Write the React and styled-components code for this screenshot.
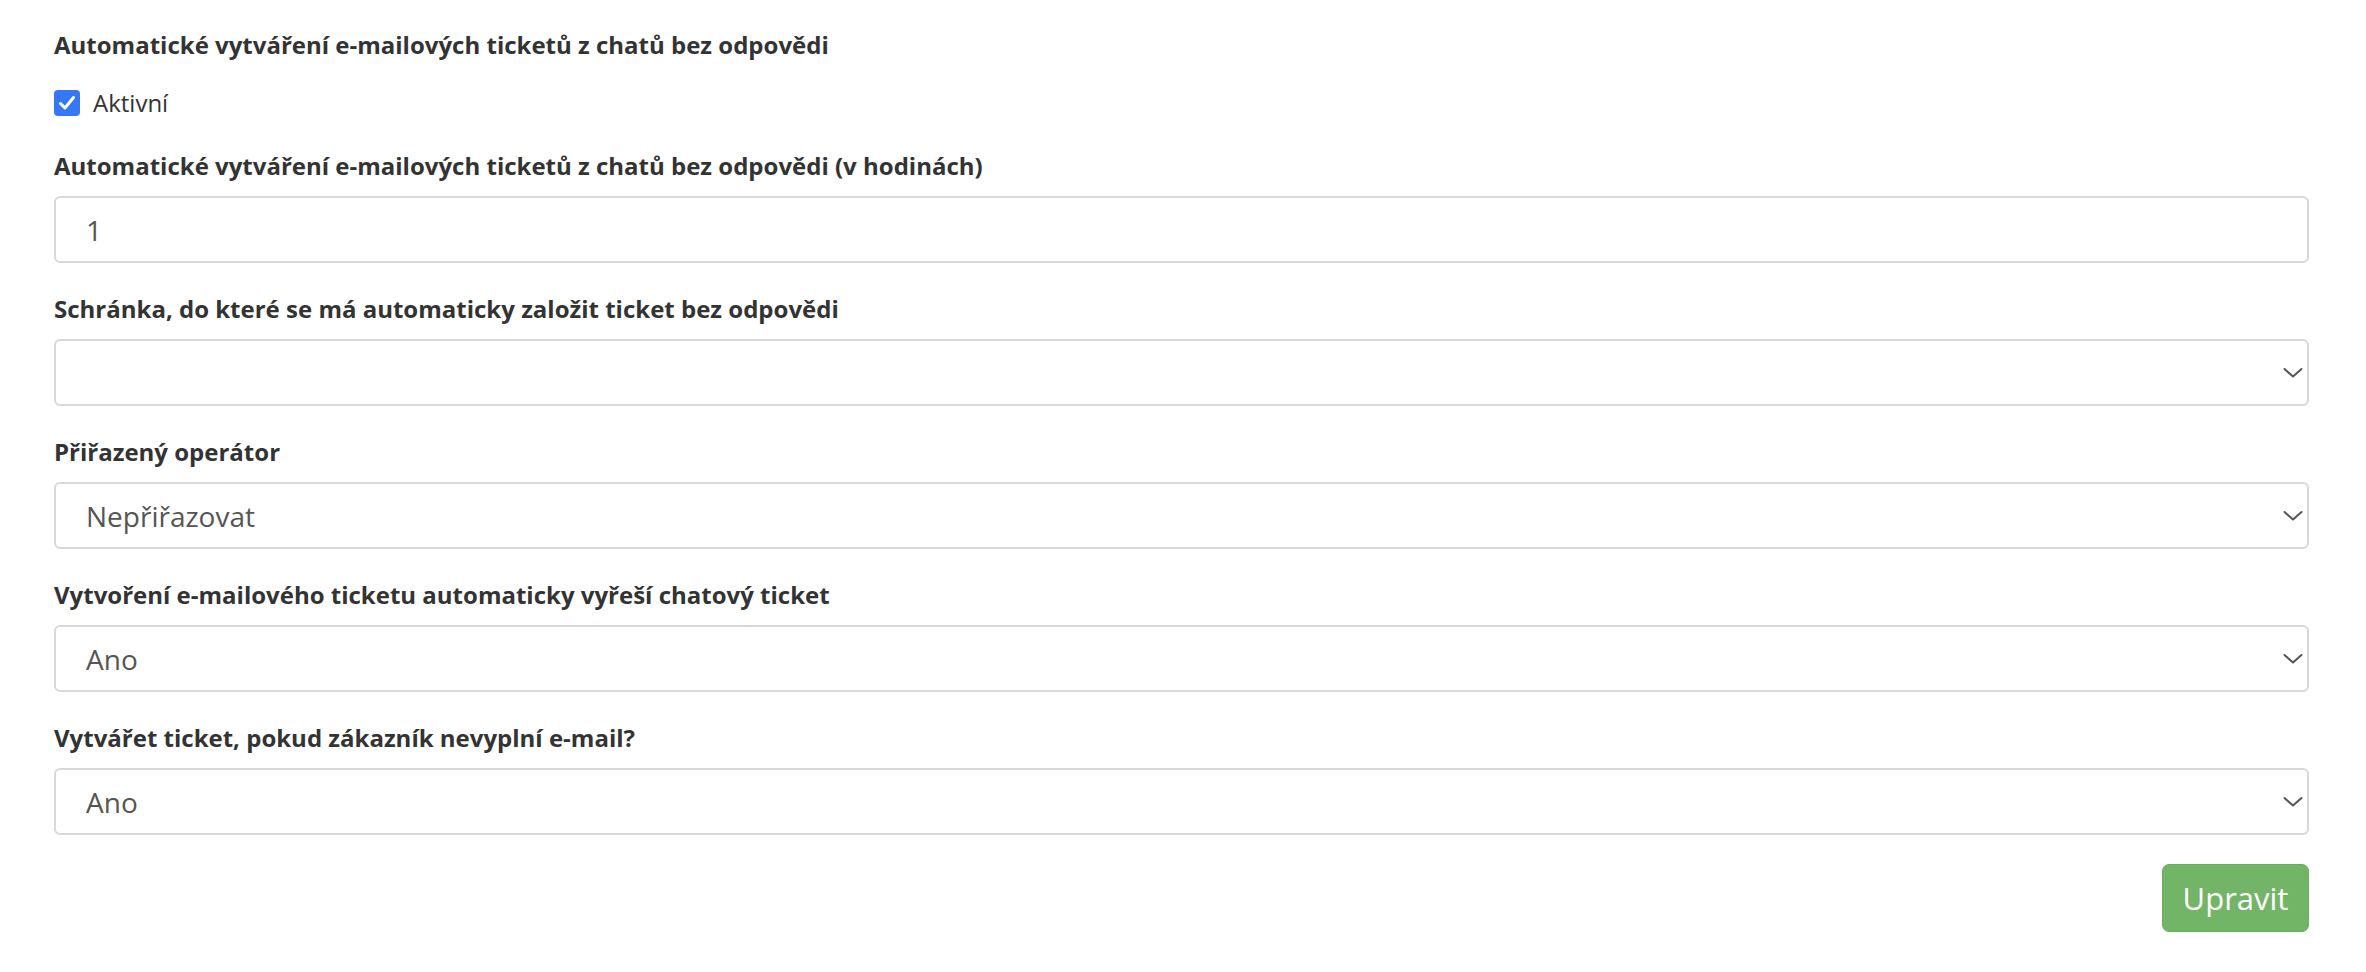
import React from "react";
import styled, { createGlobalStyle } from "styled-components";

const GlobalStyle = createGlobalStyle`
  html, body {
    margin: 0;
    padding: 0;
    background: #ffffff;
  }
  body {
    font-family: "Open Sans", "Noto Sans", "Liberation Sans", sans-serif;
    color: #333333;
  }
`;

const Page = styled.form`
  padding: 30px 57px 40px 54px;
  display: flex;
  flex-direction: column;
`;

const Group = styled.div`
  display: flex;
  flex-direction: column;
  margin-bottom: ${(p) => p.gap || 31}px;
`;

const Label = styled.label`
  font-size: 24px;
  line-height: 30px;
  font-weight: 700;
  color: #333333;
  margin-bottom: ${(p) => p.space || 15}px;
`;

const CheckRow = styled.label`
  display: flex;
  align-items: center;
  gap: 13px;
  height: 30px;
  font-size: 24px;
  color: #333333;
`;

const CheckBox = styled.span`
  width: 26px;
  height: 26px;
  border-radius: 4px;
  background: #3478f6;
  display: flex;
  align-items: center;
  justify-content: center;
  margin-top: 2px;
`;

const TextInput = styled.input`
  box-sizing: border-box;
  width: 100%;
  height: 67px;
  border: 2px solid #d8d8d8;
  border-radius: 6px;
  padding: 0 30px;
  font-family: inherit;
  font-size: 28px;
  color: #555555;
  background: #ffffff;
  outline: none;
`;

const SelectWrap = styled.div`
  position: relative;
  width: 100%;
`;

const Select = styled.select`
  box-sizing: border-box;
  width: 100%;
  height: 67px;
  appearance: none;
  -webkit-appearance: none;
  border: 2px solid #d8d8d8;
  border-radius: 6px;
  padding: 0 60px 0 30px;
  font-family: inherit;
  font-size: 28px;
  color: #555555;
  background: #ffffff;
  outline: none;
`;

const Chevron = styled.svg`
  position: absolute;
  right: 6px;
  top: 50%;
  transform: translateY(-50%);
  pointer-events: none;
`;

const Actions = styled.div`
  display: flex;
  justify-content: flex-end;
`;

const Button = styled.button`
  box-sizing: border-box;
  width: 147px;
  height: 68px;
  background: #72b566;
  border: 1.5px solid #6aad5e;
  border-radius: 7px;
  color: #ffffff;
  font-family: inherit;
  font-size: 31px;
  padding: 0;
  cursor: pointer;
`;

function ChevronIcon() {
  return (
    <Chevron width="20" height="12" viewBox="0 0 20 12">
      <path
        d="M1.5 2 L10 9.5 L18.5 2"
        fill="none"
        stroke="#555555"
        strokeWidth="2"
        strokeLinecap="round"
        strokeLinejoin="round"
      />
    </Chevron>
  );
}

function SelectField({ label, options, value, gap }) {
  return (
    <Group gap={gap}>
      <Label>{label}</Label>
      <SelectWrap>
        <Select defaultValue={value}>
          {options.map((o) => (
            <option key={o} value={o}>
              {o}
            </option>
          ))}
        </Select>
        <ChevronIcon />
      </SelectWrap>
    </Group>
  );
}

export default function App() {
  return (
    <>
      <GlobalStyle />
      <Page onSubmit={(e) => e.preventDefault()}>
        <Group gap={34}>
          <Label space={27}>
            Automatické vytváření e-mailových ticketů z chatů bez odpovědi
          </Label>
          <CheckRow>
            <CheckBox>
              <svg width="18" height="16" viewBox="0 0 18 16">
                <path
                  d="M2.5 8.5 L7 13 L15.5 2.5"
                  fill="none"
                  stroke="#ffffff"
                  strokeWidth="3"
                  strokeLinecap="round"
                  strokeLinejoin="round"
                />
              </svg>
            </CheckBox>
            Aktivní
          </CheckRow>
        </Group>

        <Group>
          <Label>
            Automatické vytváření e-mailových ticketů z chatů bez odpovědi (v
            hodinách)
          </Label>
          <TextInput type="text" defaultValue="1" />
        </Group>

        <SelectField
          label="Schránka, do které se má automaticky založit ticket bez odpovědi"
          options={[""]}
          value=""
        />
        <SelectField
          label="Přiřazený operátor"
          options={["Nepřiřazovat"]}
          value="Nepřiřazovat"
        />
        <SelectField
          label="Vytvoření e-mailového ticketu automaticky vyřeší chatový ticket"
          options={["Ano", "Ne"]}
          value="Ano"
        />
        <SelectField
          label="Vytvářet ticket, pokud zákazník nevyplní e-mail?"
          options={["Ano", "Ne"]}
          value="Ano"
          gap={29}
        />

        <Actions>
          <Button type="submit">Upravit</Button>
        </Actions>
      </Page>
    </>
  );
}
